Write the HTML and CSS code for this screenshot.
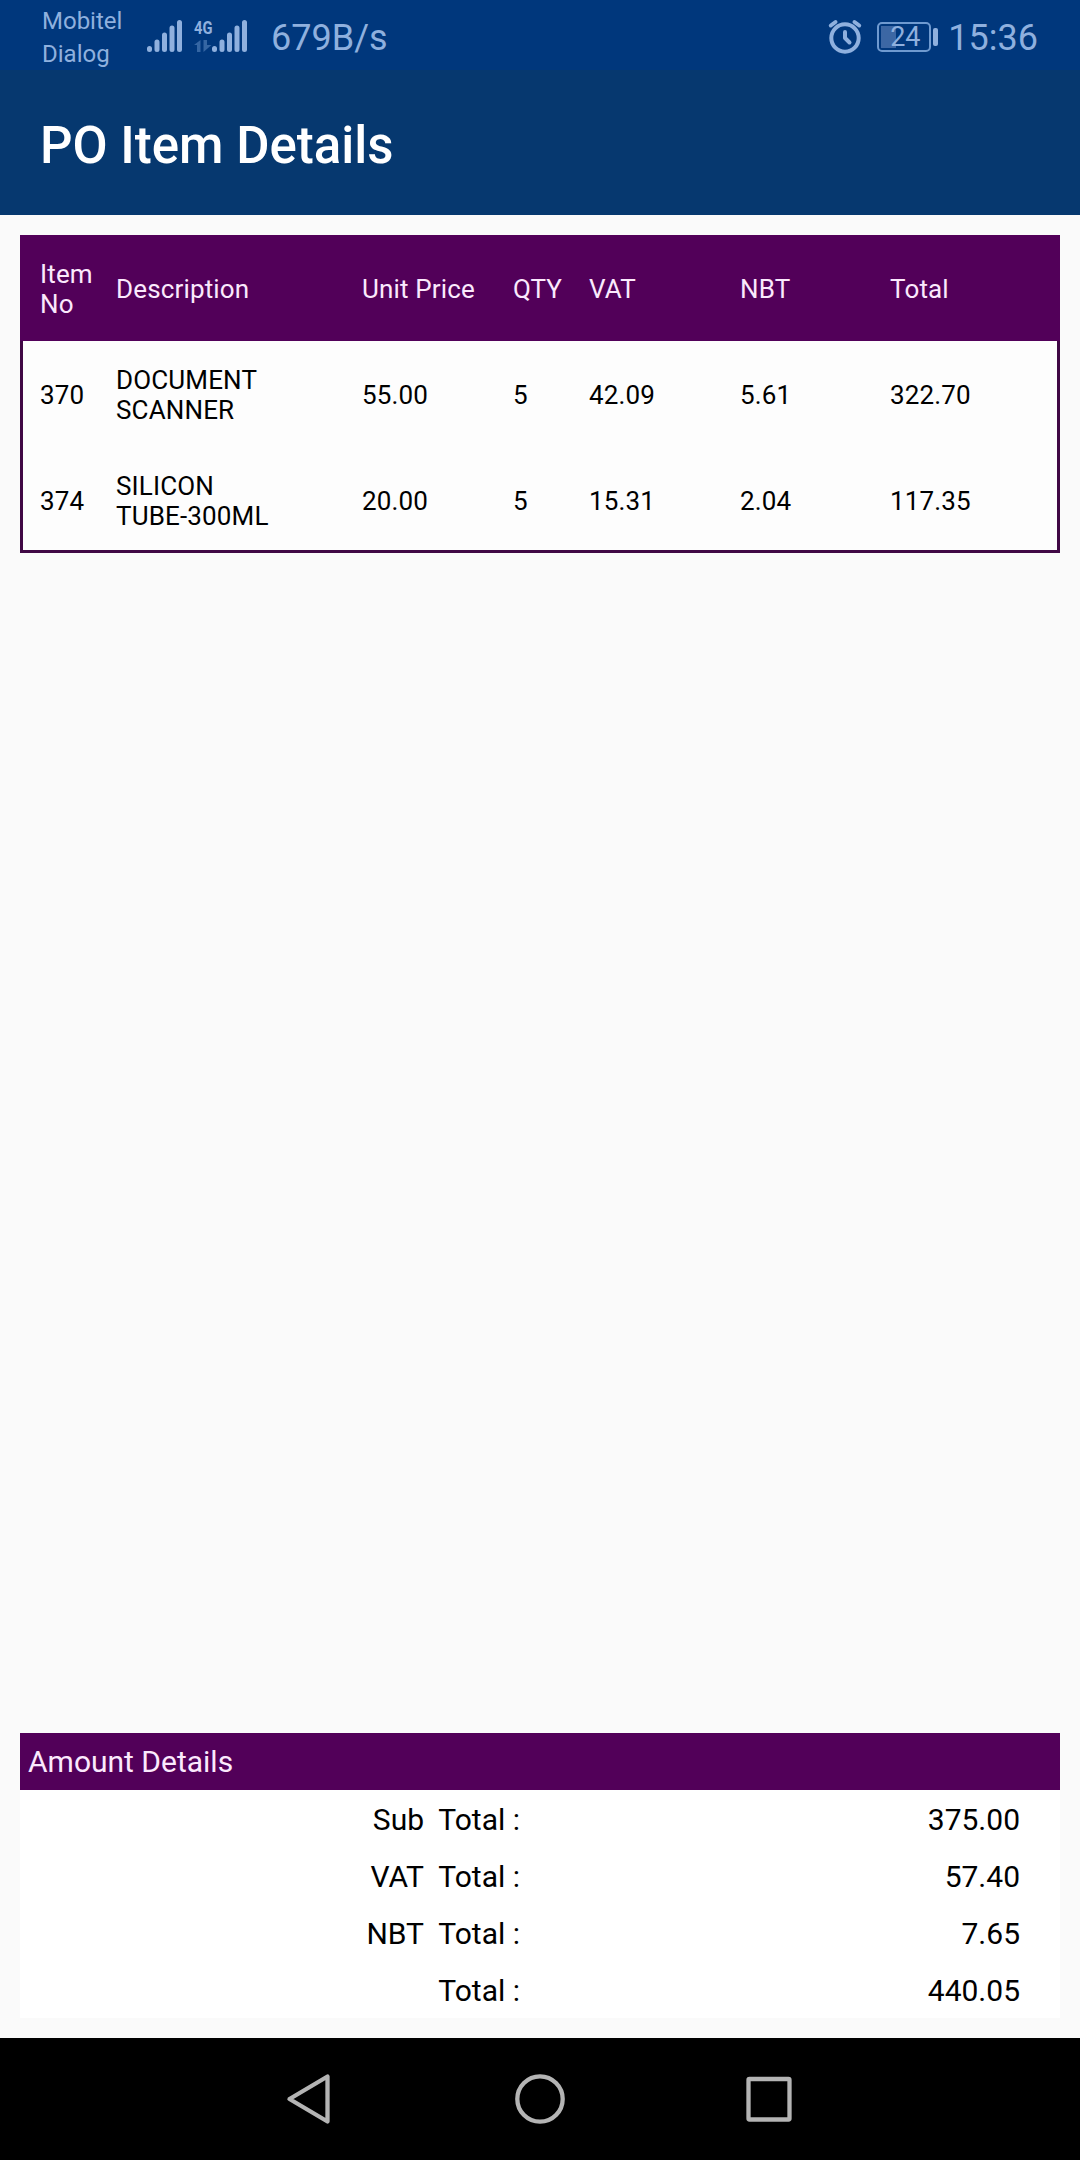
FILE: index.html
```html
<!DOCTYPE html>
<html lang="en">
<head>
    <meta charset="UTF-8">
    <meta name="viewport" content="width=device-width, initial-scale=1.0">
    <title>PO Item Details</title>
    <link rel="stylesheet" href="styles.css">
</head>
<body>
    <div class="status-bar">
        <div class="carriers">
            <span>Mobitel</span>
            <span>Dialog</span>
        </div>
        <svg class="signals" width="102" height="36" viewBox="0 0 102 36">
            <g stroke="#8fb0de" stroke-width="5" stroke-linecap="round">
                <path d="M3.5 30.5v1M11 24v7.5M18.5 17v14.5M26 10v21.5M33.5 4.5v27"/>
                <path d="M68.5 30.5v1M76 24v7.5M83.500 17v14.5M91 10v21.5M98.5 4.5v27"/>
            </g>
            <text x="48" y="15.5" textLength="18.5" lengthAdjust="spacingAndGlyphs" class="net-type">4G</text>
            <path d="M48 27l6.500-5V34H51V27zM57.500 22H61v5h4.500L57.500 34z" fill="#3566a3"/>
        </svg>
        <span class="speed">679B/s</span>
        <svg class="alarm" width="34" height="36" viewBox="0 0 34 36" fill="none" stroke="#8fb0de" stroke-width="4" stroke-linecap="round" stroke-linejoin="round">
            <circle cx="17" cy="20" r="13.7"/>
            <path d="M17 14v6l4.5 4.5"/>
            <path d="M2.8 7.5L7.5 4M31.2 7.5L26.5 4"/>
        </svg>
        <div class="battery"><span>24</span></div>
        <span class="clock">15:36</span>
    </div>

    <div class="app-bar">
        <h1>PO Item Details</h1>
    </div>

    <div class="content">
        <div class="item-table">
            <div class="row head">
                <span>Item No</span>
                <span>Description</span>
                <span>Unit Price</span>
                <span>QTY</span>
                <span>VAT</span>
                <span>NBT</span>
                <span>Total</span>
            </div>
            <div class="row">
                <span>370</span>
                <span>DOCUMENT SCANNER</span>
                <span>55.00</span>
                <span>5</span>
                <span>42.09</span>
                <span>5.61</span>
                <span>322.70</span>
            </div>
            <div class="row">
                <span>374</span>
                <span>SILICON<br>TUBE-300ML</span>
                <span>20.00</span>
                <span>5</span>
                <span>15.31</span>
                <span>2.04</span>
                <span>117.35</span>
            </div>
        </div>

        <div class="amounts">
            <h2>Amount Details</h2>
            <div class="amount"><span>Sub&nbsp; Total :</span><span>375.00</span></div>
            <div class="amount"><span>VAT&nbsp; Total :</span><span>57.40</span></div>
            <div class="amount"><span>NBT&nbsp; Total :</span><span>7.65</span></div>
            <div class="amount"><span>Total :</span><span>440.05</span></div>
        </div>
    </div>

    <div class="nav-bar">
        <svg width="54" height="54" viewBox="0 0 54 54"><path d="M43.5 4.5v45L5.500 27z"/></svg>
        <svg width="54" height="54" viewBox="0 0 54 54"><circle cx="27" cy="27" r="22.7"/></svg>
        <svg width="54" height="54" viewBox="0 0 54 54"><rect x="6.5" y="7" width="41" height="40.5" rx="1"/></svg>
    </div>
</body>
</html>
```
FILE: styles.css
```css
* {
    box-sizing: border-box;
}
body {
    margin: 0;
    height: 2160px;
    display: flex;
    flex-direction: column;
    background-color: #fafafa;
    font-family: Roboto, sans-serif;
    color: #000;
}
.status-bar {
    display: flex;
    align-items: flex-start;
    height: 70px;
    padding: 0 42px 0 42px;
    background-color: #00377c;
    color: #8fb0de;
}
.carriers {
    display: flex;
    flex-direction: column;
    width: 104px;
    padding-top: 5px;
    font-size: 24px;
    line-height: 33px;
}
.signals {
    margin-top: 18px;
    overflow: visible;
}
.net-type {
    font-size: 19px;
    font-weight: 700;
    fill: #8fb0de;
}
.speed,
.clock {
    margin-top: 17px;
    font-size: 36px;
    line-height: 42px;
}
.speed {
    margin-left: 23px;
}
.alarm {
    margin-top: 18px;
    margin-left: auto;
}
.battery {
    position: relative;
    width: 54px;
    height: 30px;
    margin: 22px 17px 0 15px;
    border: 2px solid #6f9ad0;
    border-radius: 5px;
    background: linear-gradient(#3c67a4, #3c67a4) 2px 2px / 15px 22px no-repeat;
    font-size: 27px;
    line-height: 27px;
    text-align: center;
}
.battery span {
    margin-left: 2px;
}
.battery::after {
    content: "";
    position: absolute;
    top: 4px;
    right: -9px;
    width: 5px;
    height: 18px;
    border-radius: 2px;
    background-color: #8fb0de;
}
.app-bar {
    display: flex;
    align-items: center;
    height: 145px;
    padding: 0 40px;
    background-color: #06386f;
}
h1 {
    margin: 7px 0 0;
    font-size: 51px;
    font-weight: 500;
    line-height: 60px;
    color: #fff;
}
.content {
    flex: 1;
    display: flex;
    flex-direction: column;
    justify-content: space-between;
    padding: 20px;
}
.item-table {
    border-bottom: 3px solid #400845;
    background-color: #fdfdfd;
    font-size: 26px;
    line-height: 30px;
    letter-spacing: 0.15px;
}
.row {
    display: grid;
    grid-template-columns: 76px 246px 151px 76px 151px 150px 1fr;
    align-items: center;
    height: 106px;
    padding-top: 2px;
    padding-left: 17px;
    border: solid #400845;
    border-width: 0 3px;
}
.row:last-child {
    height: 103px;
    padding-top: 5px;
}
.row span {
    padding-right: 22px;
}
.row span:nth-child(2) {
    padding-right: 80px;
}
.row.head {
    padding-top: 1px;
    background-color: #520059;
    border-color: #520059;
    color: #fbe9fd;
}
.row.head span {
    padding-right: 0;
}
.row.head span:first-child {
    padding-right: 22px;
}
.amounts {
    background-color: #fff;
    font-size: 30px;
    line-height: 57px;
}
h2 {
    margin: 0;
    padding: 0 8px;
    height: 57px;
    font-size: 30px;
    font-weight: 400;
    background-color: #520059;
    color: #fbe9fd;
}
.amount {
    display: flex;
    justify-content: space-between;
    padding-top: 1px;
    padding-right: 40px;
    height: 57px;
}
.amount span:first-child {
    width: 500px;
    text-align: right;
}
.nav-bar {
    display: flex;
    justify-content: center;
    align-items: center;
    gap: 175px;
    height: 122px;
    background-color: #000;
}
.nav-bar svg {
    fill: none;
    stroke: #b4b4b4;
    stroke-width: 4.3;
    stroke-linejoin: round;
}
```
